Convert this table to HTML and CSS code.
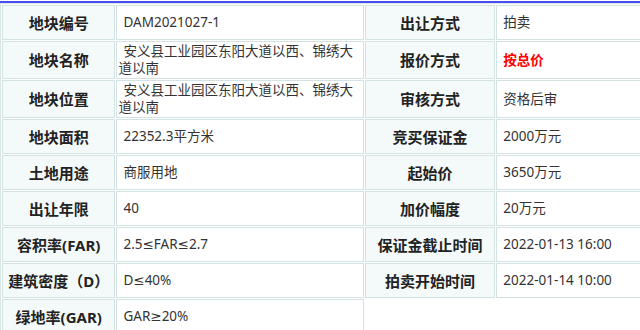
FILE: index.html
```html
<!DOCTYPE html>
<html lang="zh-CN">
<head>
<meta charset="utf-8">
<title>地块信息</title>
<link rel="stylesheet" href="styles.css">
</head>
<body>
<div class="bar"></div>
<table class="info">
  <colgroup>
    <col class="c1"><col class="c2"><col class="c3"><col class="c4">
  </colgroup>
  <tr>
    <td class="label">地块编号</td><td class="value">DAM2021027-1</td>
    <td class="label">出让方式</td><td class="value">拍卖</td>
  </tr>
  <tr class="tall">
    <td class="label">地块名称</td><td class="value">安义县工业园区东阳大道以西、锦绣大道以南</td>
    <td class="label">报价方式</td><td class="value"><span class="red">按总价</span></td>
  </tr>
  <tr class="tall">
    <td class="label">地块位置</td><td class="value">安义县工业园区东阳大道以西、锦绣大道以南</td>
    <td class="label">审核方式</td><td class="value">资格后审</td>
  </tr>
  <tr>
    <td class="label">地块面积</td><td class="value">22352.3平方米</td>
    <td class="label">竞买保证金</td><td class="value">2000万元</td>
  </tr>
  <tr>
    <td class="label">土地用途</td><td class="value">商服用地</td>
    <td class="label">起始价</td><td class="value">3650万元</td>
  </tr>
  <tr>
    <td class="label">出让年限</td><td class="value">40</td>
    <td class="label">加价幅度</td><td class="value">20万元</td>
  </tr>
  <tr>
    <td class="label">容积率(FAR)</td><td class="value">2.5≤FAR≤2.7</td>
    <td class="label">保证金截止时间</td><td class="value">2022-01-13 16:00</td>
  </tr>
  <tr>
    <td class="label">建筑密度（D）</td><td class="value">D≤40%</td>
    <td class="label">拍卖开始时间</td><td class="value">2022-01-14 10:00</td>
  </tr>
  <tr>
    <td class="label">绿地率(GAR)</td><td class="value">GAR≥20%</td>
  </tr>
</table>
</body>
</html>
```
FILE: styles.css
```css
html, body {
  margin: 0;
  padding: 0;
  background: #fff;
  overflow: hidden;
}
body {
  font-family: "Noto Sans", "DejaVu Sans", "Noto Sans CJK SC", sans-serif;
  color: #333;
}
.bar {
  margin-top: 1px;
  height: 2px;
  background: #4b4bf2;
}
.info {
  width: 700px;
  table-layout: fixed;
  border: 1px solid #dbe6e6;
  border-right: none;
  border-spacing: 1px 1px;
}
.c1 { width: 112px; }
.c2 { width: 244px; }
.c3 { width: 129px; }
.c4 { width: 200px; }
.info td {
  border: 1px solid #d3e2e2;
  height: 33px;
  padding: 0 1px;
  vertical-align: middle;
  line-height: 16px;
}
.info tr.tall td {
  height: 36px;
}
.label {
  background: #f4f9f9;
  text-align: center;
  font-weight: bold;
  font-size: 15px;
  color: #222;
}
.info td.value {
  background: #fff;
  font-size: 13.5px;
  line-height: 17px;
  text-indent: 5px;
  color: #333;
}
.red {
  color: #f00;
  font-weight: bold;
}
```
